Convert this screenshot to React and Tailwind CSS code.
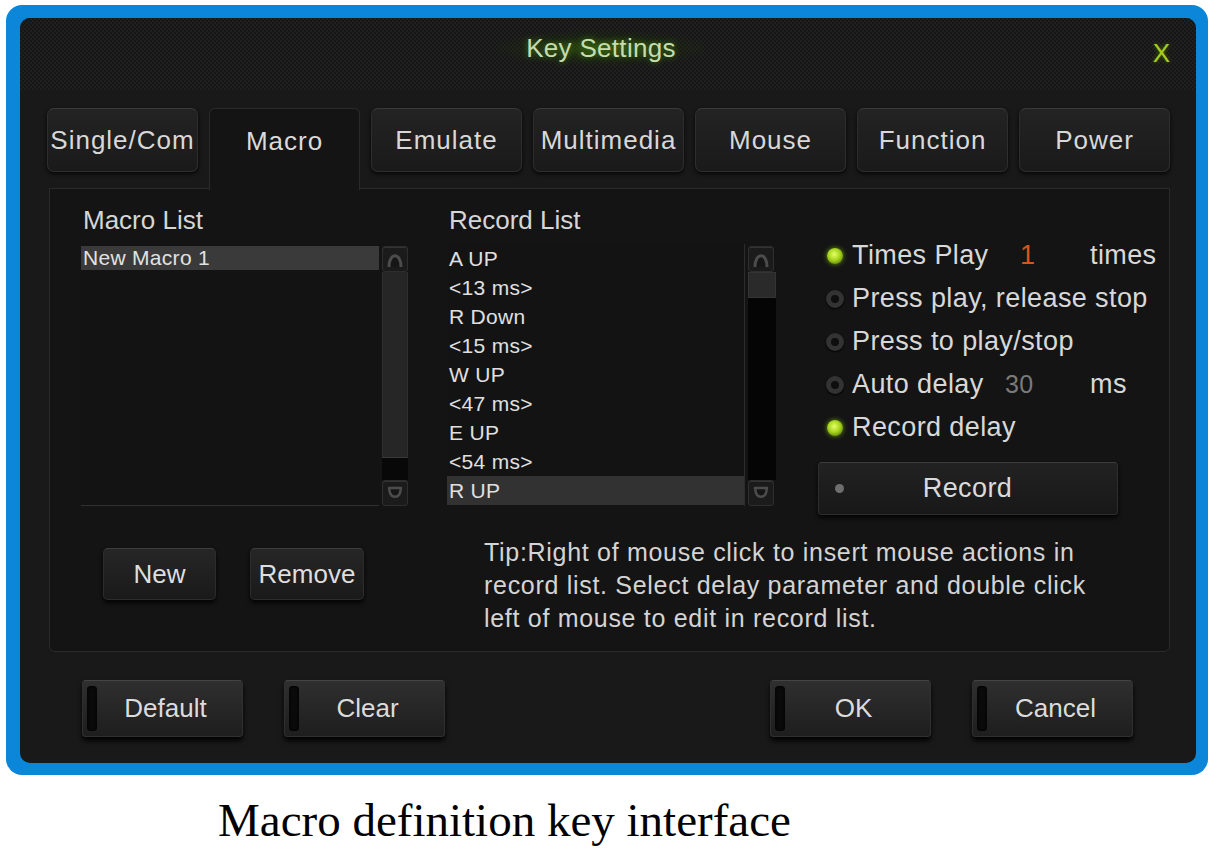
import { useState } from "react";

// ---------- small drawings ----------
function ScrollArrow({ up }) {
  return (
    <div className="h-[26px] w-[26px] flex items-center justify-center bg-[#1b1b1b] border border-[#2e2e2e] rounded-[3px] shadow-[inset_0_1px_0_#333]">
      <svg width="20" height="20" viewBox="0 0 20 20">
        {up ? (
          <path d="M4 18 C4 3, 16 3, 16 18" fill="#161616" stroke="#4c4c4c" strokeWidth="3" />
        ) : (
          <path d="M4 5 L16 5 L15 10 C13 15, 7 15, 5 10 Z" fill="#161616" stroke="#4c4c4c" strokeWidth="2.5" strokeLinejoin="round" />
        )}
      </svg>
    </div>
  );
}

function Radio({ on }) {
  return on ? (
    <span className="w-[16px] h-[16px] rounded-full bg-[radial-gradient(circle_at_45%_40%,#e4ff6a_0%,#a6d41c_45%,#3f5a08_100%)] shadow-[0_0_5px_#6a9a10]" />
  ) : (
    <span className="w-[18px] h-[18px] rounded-full bg-[#0e0e0e] border-[5px] border-[#333] shadow-[0_1px_2px_#000]" />
  );
}

function SmallButton({ children, className = "" }) {
  return (
    <button
      className={`h-[52px] flex items-center justify-center rounded-[5px] border border-[#2c2c2c] border-t-[#3e3e3e] bg-[linear-gradient(#262626,#1a1a1a)] shadow-[0_3px_4px_rgba(0,0,0,0.85)] text-[26px] text-[#dedede] ${className}`}
    >
      {children}
    </button>
  );
}

function FooterButton({ children }) {
  return (
    <button className="relative w-[161px] h-[57px] rounded-[4px] border border-[#303030] border-t-[#444] bg-[linear-gradient(#2f2f2f,#1e1e1e)] shadow-[0_4px_5px_rgba(0,0,0,0.9)] flex items-center text-[26px] text-[#dcdcdc]">
      <span className="ml-[4px] w-[10px] h-[45px] rounded-[3px] bg-[#0a0a0a] border border-[#050505] shadow-[inset_0_0_2px_#000]" />
      <span className="flex-1 text-center pr-[8px]">{children}</span>
    </button>
  );
}

export default function App() {
  const tabs = ["Single/Com", "Macro", "Emulate", "Multimedia", "Mouse", "Function", "Power"];
  const [active, setActive] = useState("Macro");
  const records = ["A UP", "<13 ms>", "R Down", "<15 ms>", "W UP", "<47 ms>", "E UP", "<54 ms>", "R UP"];

  return (
    <div className="w-[1215px] h-[851px] bg-white pt-[5px] pl-[6px] font-['Liberation_Sans',Arial,sans-serif]">
      {/* blue frame */}
      <div className="w-[1202px] h-[770px] bg-[#0b86d8] rounded-[16px] pl-[14px] pt-[13px] pr-[12px] pb-[12px]">
        <div className="w-[1176px] h-[745px] bg-[#191919] rounded-[10px] overflow-hidden flex flex-col">
          {/* title bar */}
          <div className="relative h-[72px] shrink-0 bg-[repeating-conic-gradient(#202020_0%_25%,#161616_0%_50%)] bg-[length:4px_4px] flex justify-center pr-[14px]">
            <div className="mt-[12px] h-[36px] px-[30px] bg-[radial-gradient(ellipse_at_center,rgba(60,110,10,0.6)_0%,rgba(30,60,5,0.28)_45%,transparent_75%)] text-[26px] leading-[36px] tracking-[0.3px] text-[#c6dcae] [text-shadow:0_0_6px_#3e7a0c]">
              Key Settings
            </div>
            <span className="absolute right-[26px] top-[20px] text-[26px] leading-[30px] text-[#a6cc1e] [text-shadow:0_0_4px_#4a6a00]">
              X
            </span>
          </div>

          {/* tabs */}
          <div className="pt-[18px] pl-[27px] pr-[26px] flex items-start gap-[11px] h-[98px] shrink-0 relative z-10">
            {tabs.map((t) =>
              t === active ? (
                <div
                  key={t}
                  className="w-[151px] h-[82px] rounded-t-[6px] border border-b-0 border-[#2a2a2a] bg-[#141414] text-[26px] tracking-[1px] text-[#dadada] flex justify-center pt-[13px]"
                >
                  {t}
                </div>
              ) : (
                <button
                  key={t}
                  onClick={() => setActive(t)}
                  className="w-[151px] h-[64px] rounded-[7px] border border-[#2e2e2e] border-t-[#3a3a3a] bg-[linear-gradient(#232323,#1a1a1a)] shadow-[0_2px_4px_rgba(0,0,0,0.8)] text-[26px] tracking-[1px] text-[#d8d8d8] flex items-center justify-center"
                >
                  {t}
                </button>
              )
            )}
          </div>

          {/* content panel */}
          <div className="ml-[29px] mr-[26px] h-[464px] shrink-0 bg-[#141414] border border-[#2a2a2a] rounded-b-[6px] flex pl-[31px] pt-[13px]">
            {/* macro list column */}
            <div className="w-[327px] flex flex-col">
              <div className="h-[42px] leading-[36px] text-[26px] text-[#d6d6d6] pl-[2px]">Macro List</div>
              <div className="h-[262px] flex gap-[3px]">
                <div className="w-[298px] h-full bg-[#131313] border-b border-[#303030] pt-[2px]">
                  <div className="h-[24px] bg-[#3a3a3a] pl-[2px] text-[21px] leading-[24px] text-[#e2e2e2] tracking-[0.3px]">
                    New Macro 1
                  </div>
                </div>
                <div className="w-[26px] h-full flex flex-col pt-[2px]">
                  <ScrollArrow up />
                  <div className="h-[186px] bg-[#262626] border-x border-[#2f2f2f] border-b border-b-[#3a3a3a]" />
                  <div className="flex-1 bg-[#080808]" />
                  <ScrollArrow />
                </div>
              </div>
              <div className="mt-[42px] flex">
                <SmallButton className="ml-[22px] w-[113px]">New</SmallButton>
                <SmallButton className="ml-[34px] w-[114px]">Remove</SmallButton>
              </div>
            </div>

            {/* right area */}
            <div className="ml-[39px] flex flex-col">
              <div className="flex h-[304px]">
                {/* record list */}
                <div className="w-[329px] flex flex-col">
                  <div className="h-[42px] leading-[36px] text-[26px] text-[#d6d6d6] pl-[2px]">Record List</div>
                  <div className="h-[262px] flex gap-[3px]">
                    <div className="w-[298px] h-full bg-[#131313] border-r border-[#2c2c2c]">
                      {records.map((r, i) => (
                        <div
                          key={i}
                          className={`h-[29px] leading-[29px] pl-[2px] text-[21px] tracking-[0.3px] text-[#e0e0e0] ${
                            i === records.length - 1 ? "bg-[#323232]" : ""
                          }`}
                        >
                          {r}
                        </div>
                      ))}
                    </div>
                    <div className="w-[28px] h-full flex flex-col pt-[2px]">
                      <ScrollArrow up />
                      <div className="h-[26px] bg-[#2a2a2a] border border-[#343434]" />
                      <div className="flex-1 bg-[#050505]" />
                      <ScrollArrow />
                    </div>
                  </div>
                </div>

                {/* options */}
                <div className="ml-[42px] pt-[32px] flex flex-col text-[27px] text-[#d8d8d8] tracking-[0.4px]">
                  <div className="h-[43px] shrink-0 flex items-center">
                    <span className="w-[34px] flex justify-center"><Radio on /></span>
                    <span className="w-[168px]">Times Play</span>
                    <span className="w-[70px] text-[#d4581e]">1</span>
                    <span>times</span>
                  </div>
                  <div className="h-[43px] shrink-0 flex items-center">
                    <span className="w-[34px] flex justify-center"><Radio /></span>
                    <span>Press play, release stop</span>
                  </div>
                  <div className="h-[43px] shrink-0 flex items-center">
                    <span className="w-[34px] flex justify-center"><Radio /></span>
                    <span>Press to play/stop</span>
                  </div>
                  <div className="h-[43px] shrink-0 flex items-center">
                    <span className="w-[34px] flex justify-center"><Radio /></span>
                    <span className="w-[153px]">Auto delay</span>
                    <span className="w-[85px] text-[#7a7a7a] text-[25px]">30</span>
                    <span>ms</span>
                  </div>
                  <div className="h-[43px] shrink-0 flex items-center">
                    <span className="w-[34px] flex justify-center"><Radio on /></span>
                    <span>Record delay</span>
                  </div>
                  <button className="mt-[13px] shrink-0 w-[300px] h-[53px] rounded-[4px] border border-[#2e2e2e] border-t-[#3c3c3c] bg-[linear-gradient(#222,#181818)] shadow-[0_3px_4px_rgba(0,0,0,0.85)] flex items-center">
                    <span className="ml-[16px] w-[9px] h-[9px] rounded-full bg-[#6e6e6e]" />
                    <span className="flex-1 text-center pr-[26px] text-[27px] text-[#dadada]">Record</span>
                  </button>
                </div>
              </div>

              {/* tip */}
              <p className="mt-[30px] pl-[37px] text-[25px] leading-[33px] text-[#d4d4d4] tracking-[0.7px]">
                Tip:Right of mouse click to insert mouse actions in
                <br />
                record list. Select delay parameter and double click
                <br />
                left of mouse to edit in record list.
              </p>
            </div>
          </div>

          {/* footer buttons */}
          <div className="mt-[28px] h-[57px] flex pl-[62px]">
            <FooterButton>Default</FooterButton>
            <div className="ml-[41px]">
              <FooterButton>Clear</FooterButton>
            </div>
            <div className="ml-[325px]">
              <FooterButton>OK</FooterButton>
            </div>
            <div className="ml-[41px]">
              <FooterButton>Cancel</FooterButton>
            </div>
          </div>
        </div>
      </div>

      {/* caption */}
      <div className="pl-[212px] pt-[18px] font-['Liberation_Serif','Times_New_Roman',serif] text-[47px] leading-[54px] text-black">
        Macro definition key interface
      </div>
    </div>
  );
}
